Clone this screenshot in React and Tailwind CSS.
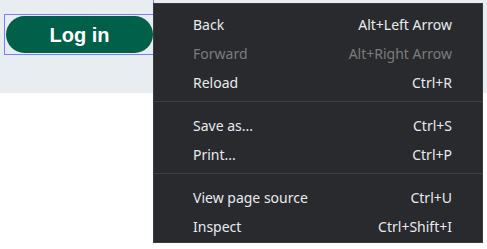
import React from "react";

const items = [
    { label: "Back", key: "Alt+Left Arrow" },
    { label: "Forward", key: "Alt+Right Arrow", disabled: true },
    { label: "Reload", key: "Ctrl+R" },
    "sep",
    { label: "Save as...", key: "Ctrl+S" },
    { label: "Print...", key: "Ctrl+P" },
    "sep",
    { label: "View page source", key: "Ctrl+U" },
    { label: "Inspect", key: "Ctrl+Shift+I" },
];

const ContextMenu = () => (
    <div className="absolute left-[153px] top-[3px] w-[330px] h-[240px] bg-[#292a2d] border border-[#3a3b3e] pt-[6px] font-['Noto_Sans',sans-serif] text-[14px]">
        {items.map((item, i) =>
            item === "sep" ? (
                <div key={i} className="mt-[4px] mb-[9px] h-px bg-[#3f4043]"></div>
            ) : (
                <div
                    key={i}
                    className={`h-[29px] flex items-center justify-between pl-[39px] pr-[30px] ${item.disabled ? "text-[#7b7c7e]" : "text-[#e8eaed]"}`}
                >
                    <span>{item.label}</span>
                    <span>{item.key}</span>
                </div>
            )
        )}
    </div>
);

export default function App() {
    return (
        <div className="relative w-[487px] h-[249px] bg-white overflow-hidden">
            <div className="h-[93px] bg-[#e8edf1] pt-[14px] pl-[4px]">
                <div className="w-[150px] h-[41px] border border-[#7d7df2] p-px">
                    <div className="w-[147px] h-[37px] rounded-full bg-[#00604a] flex items-center justify-center text-white font-bold text-[20px] font-['Liberation_Sans',Arial,sans-serif]">
                        Log in
                    </div>
                </div>
            </div>
            <div className="absolute left-[153px] top-0 w-px h-[3px] bg-[#7d7df2]"></div>
            <ContextMenu />
        </div>
    );
}
